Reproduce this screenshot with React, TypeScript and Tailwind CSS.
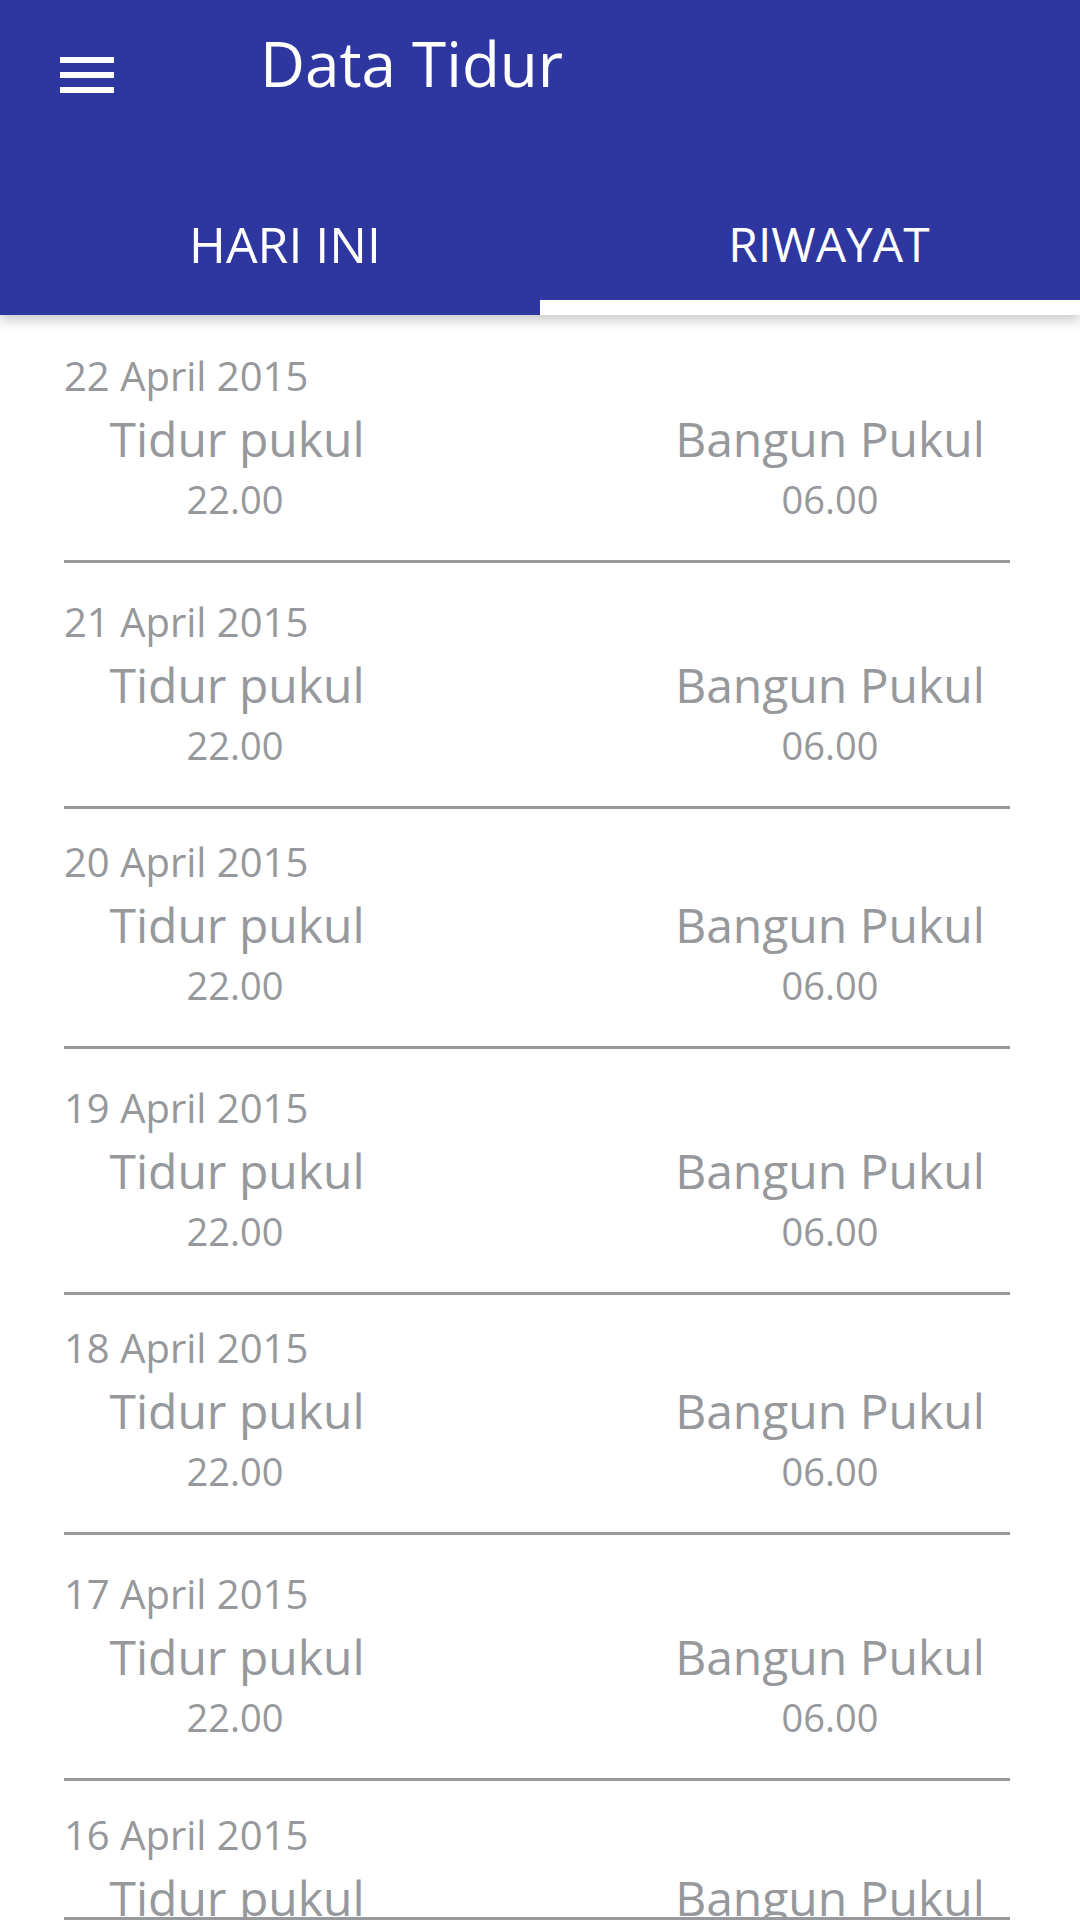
import React from "react";

interface SleepEntry {
  date: string;
  sleep: string;
  wake: string;
  top: string;
}

const entries: SleepEntry[] = [
  { date: "22 April 2015", sleep: "22.00", wake: "06.00", top: "pt-[41px]" },
  { date: "21 April 2015", sleep: "22.00", wake: "06.00", top: "pt-[39px]" },
  { date: "20 April 2015", sleep: "22.00", wake: "06.00", top: "pt-[33px]" },
  { date: "19 April 2015", sleep: "22.00", wake: "06.00", top: "pt-[39px]" },
  { date: "18 April 2015", sleep: "22.00", wake: "06.00", top: "pt-[33px]" },
  { date: "17 April 2015", sleep: "22.00", wake: "06.00", top: "pt-[39px]" },
  { date: "16 April 2015", sleep: "22.00", wake: "06.00", top: "pt-[34px]" },
];

const Divider: React.FC = () => <div className="mx-[64px] mr-[70px] h-[3px] bg-[#97999c] shrink-0" />;

const EntryRow: React.FC<{ entry: SleepEntry; last: boolean }> = ({ entry, last }) => (
  <div className="flex flex-col">
    <div className={`${entry.top} pb-[42px] text-[#96989b]`}>
      <div className="pl-[64px] text-[40px] leading-[40px]">{entry.date}</div>
      <div className="flex pl-[64px] pr-[70px] mt-[19px]">
        <div className="w-[346px] flex flex-col items-center">
          <div className="text-[48px] leading-[47px]">Tidur pukul</div>
          <div className="text-[38px] leading-[38px] mt-[18px] pr-[4px]">{entry.sleep}</div>
        </div>
        <div className="ml-auto w-[360px] flex flex-col items-center">
          <div className="text-[48px] leading-[47px]">Bangun Pukul</div>
          <div className="text-[38px] leading-[38px] mt-[18px]">{entry.wake}</div>
        </div>
      </div>
    </div>
    {!last && <Divider />}
  </div>
);

export default function App() {
  return (
    <div
      className="w-[1080px] h-[1920px] bg-white flex flex-col overflow-hidden"
      style={{ fontFamily: '"Open Sans", "Noto Sans", sans-serif' }}
    >
      <header className="relative z-10 bg-[#2e37a0] text-white shrink-0 shadow-[0_5px_12px_rgba(0,0,0,0.22)]">
        <div className="h-[190px] flex items-start pt-[32px]">
          <button className="ml-[60px] mt-[25px] flex flex-col gap-[9px]" aria-label="menu">
            <span className="block w-[54px] h-[6px] bg-white" />
            <span className="block w-[54px] h-[6px] bg-white" />
            <span className="block w-[54px] h-[6px] bg-white" />
          </button>
          <h1 className="ml-[146px] text-[62px] leading-[62px] font-normal">Data Tidur</h1>
        </div>
        <div className="flex h-[125px]">
          <div className="flex-1 flex flex-col">
            <div className="pt-[30px] pl-[30px] text-center text-[50px] leading-[48px]">HARI INI</div>
            <div className="mt-auto h-[15px]" />
          </div>
          <div className="flex-1 flex flex-col">
            <div className="pt-[30px] pl-[38px] text-center text-[48px] leading-[48px]">RIWAYAT</div>
            <div className="mt-auto h-[15px] bg-white" />
          </div>
        </div>
      </header>
      <div className="flex-1 overflow-hidden">
        {entries.map((e, i) => (
          <EntryRow key={e.date} entry={e} last={i === entries.length - 1} />
        ))}
      </div>
      <Divider />
    </div>
  );
}
